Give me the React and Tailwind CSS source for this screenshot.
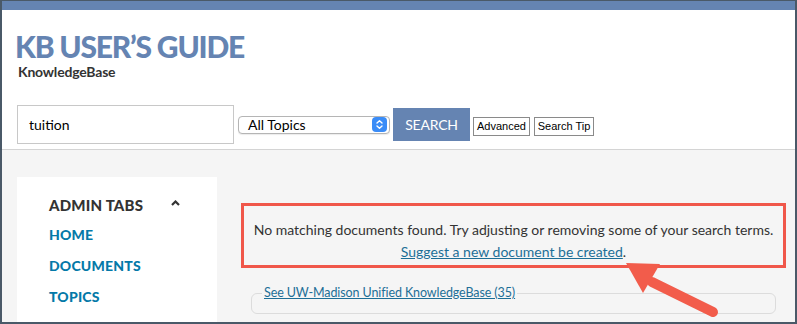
const SelectArrows = () => (
  <span className="ml-auto w-[15px] h-[15px] rounded-[4px] bg-[#3a8cf7] flex items-center justify-center mr-[2px]">
    <svg width="9" height="11" viewBox="0 0 9 11" fill="none" stroke="white" strokeWidth="1.4" strokeLinecap="round" strokeLinejoin="round">
      <path d="M2 4 L4.5 1.7 L7 4" />
      <path d="M2 7 L4.5 9.3 L7 7" />
    </svg>
  </span>
);

const Pointer = () => (
  <svg className="absolute left-0 top-0 pointer-events-none" width="797" height="324" viewBox="0 0 797 324">
    <line x1="650" y1="281" x2="711" y2="311" stroke="#f25c4b" strokeWidth="10" strokeLinecap="round" />
    <polygon points="624,262 658,263 641,292" fill="#f25c4b" />
  </svg>
);

const smallBtn = { fontFamily: "'Liberation Sans', Arial, sans-serif" };

export default function App() {
  return (
    <div
      className="relative w-[797px] h-[324px] overflow-hidden border-t border-l-2 border-r-2 border-b-2 border-[#4a5968] bg-[#f5f5f5] flex flex-col"
      style={{ fontFamily: "Lato, 'Open Sans', sans-serif" }}
    >
      <div className="h-[9px] bg-[#6584b2] shrink-0" />

      {/* Header */}
      <div className="bg-white border-b border-[#d4d4d4] h-[140px] shrink-0 pl-[13px] pt-[20px]">
        <h1 className="text-[30px] leading-[32px] font-black tracking-[-1.2px] text-[#6584b2]">
          KB USER’S GUIDE
        </h1>
        <p className="text-[14px] leading-[16px] font-bold text-[#333] ml-[3px] mt-[2px] tracking-[-0.2px]">KnowledgeBase</p>

        <div className="flex items-center mt-[25px] ml-[2px]">
          <div className="w-[217px] h-[39px] border border-[#c8c8c8] flex items-center pl-[11px] text-[14px] text-black">
            tuition
          </div>
          <div className="ml-[4px] w-[152px] h-[18px] border border-[#b5b5b5] rounded-[4px] bg-white flex items-center pl-[9px] text-[14px] text-black shadow-[0_1px_1px_rgba(0,0,0,0.08)]">
            All Topics
            <SelectArrows />
          </div>
          <button className="ml-[3px] w-[77px] h-[33px] bg-[#6584b2] text-white text-[14px] tracking-[-0.2px]">
            SEARCH
          </button>
          <button
            className="ml-[3px] mt-[3px] h-[19px] w-[57px] border border-[#8a8a8a] bg-white text-[11px] text-black"
            style={smallBtn}
          >
            Advanced
          </button>
          <button
            className="ml-[4px] mt-[3px] h-[19px] w-[60px] border border-[#8a8a8a] bg-white text-[11px] text-black"
            style={smallBtn}
          >
            Search Tip
          </button>
        </div>
      </div>

      {/* Body */}
      <div className="flex flex-1 pl-[15px] pt-[27px]">
        <aside className="w-[200px] bg-white pl-[32px] pt-[17px] shrink-0">
          <div className="flex items-center text-[15px] font-black text-[#333] tracking-[0.2px]">
            ADMIN TABS
            <svg className="ml-[28px] mb-[4px]" width="9" height="6" viewBox="0 0 9 6">
              <path d="M1 5 L4.5 1.5 L8 5" stroke="#333" strokeWidth="2.2" fill="none" />
            </svg>
          </div>
          <ul className="mt-[9px] flex flex-col gap-[13px] text-[14px] leading-[18px] font-black text-[#0479a8] tracking-[0.2px]">
            <li>HOME</li>
            <li>DOCUMENTS</li>
            <li>TOPICS</li>
          </ul>
        </aside>

        <main className="ml-[24px] w-[545px] pt-[26px]">
          <div className="border-[3px] border-[#f0574a] h-[65px] flex flex-col items-center pt-[13px] text-[14px] leading-[22px] text-[#333]">
            <p>No matching documents found. Try adjusting or removing some of your search terms.</p>
            <p>
              <span className="text-[#1d6f97] underline">Suggest a new document be created</span>.
            </p>
          </div>
          <fieldset className="mx-[10px] mt-[16px] border border-[#dcdcdc] rounded-[6px] h-[30px] px-[10px]">
            <legend className="px-[2px] text-[12.5px] tracking-[-0.1px] text-[#1d6f97] underline">
              See UW-Madison Unified KnowledgeBase (35)
            </legend>
          </fieldset>
        </main>
      </div>

      <Pointer />
    </div>
  );
}
